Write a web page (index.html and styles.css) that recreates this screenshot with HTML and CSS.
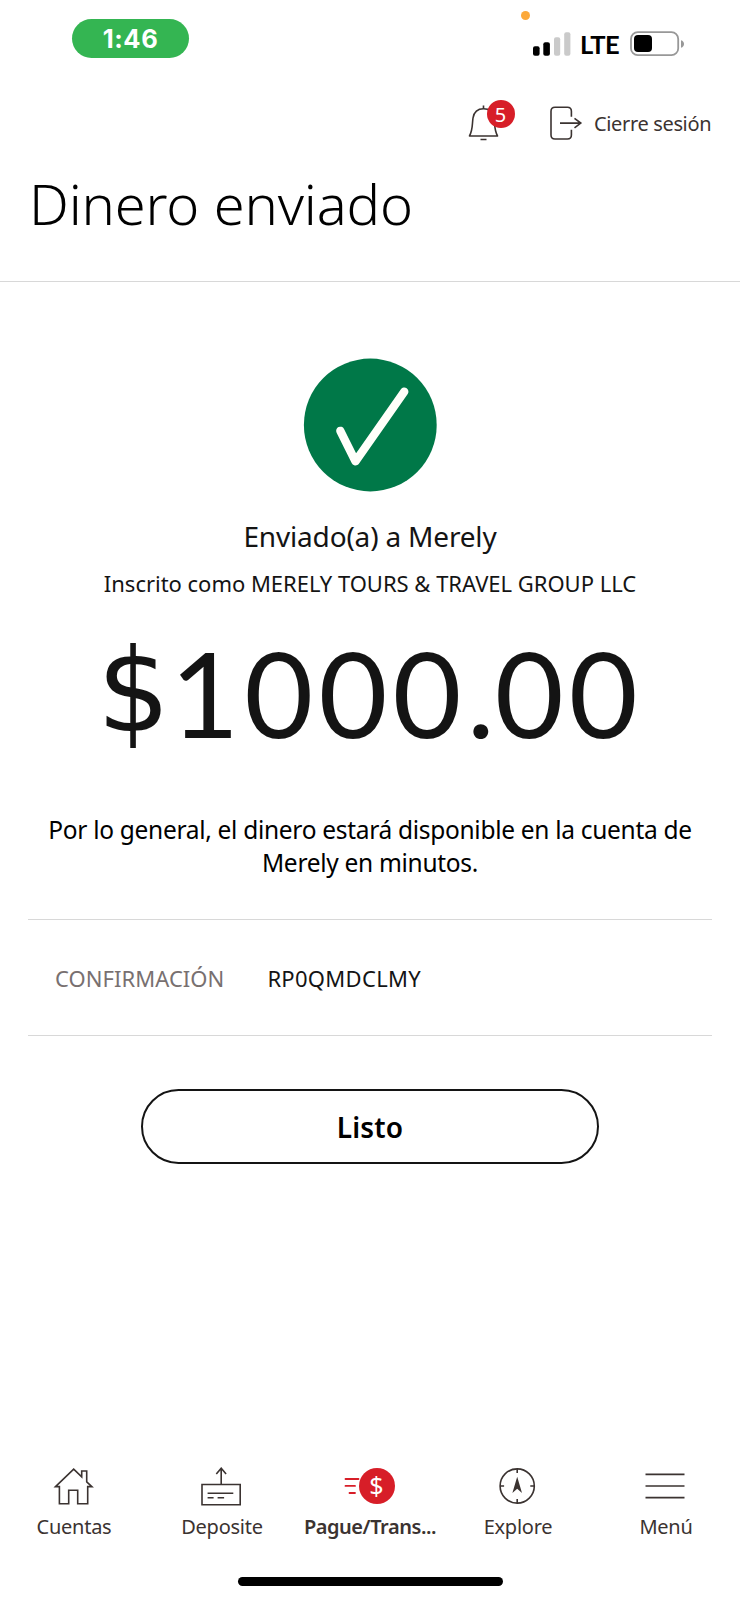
FILE: index.html
```html
<!DOCTYPE html>
<html lang="es">
<head>
<meta charset="utf-8">
<title>Dinero enviado</title>
<link rel="stylesheet" href="styles.css">
</head>
<body>
<div class="screen">
  <div class="status-bar">
    <div class="clock">1:46</div>
    <div class="status-right">
      <span class="mic-dot"></span>
      <svg class="signal" width="38" height="24" viewBox="0 0 38 24">
        <rect x="0" y="14.3" width="6.6" height="9.4" rx="2"/>
        <rect x="10.3" y="10.3" width="6.6" height="13.4" rx="2"/>
        <rect class="off" x="21" y="5.2" width="6.2" height="18.5" rx="2"/>
        <rect class="off" x="31.2" y="0.2" width="6.2" height="23.5" rx="2"/>
      </svg>
      <span class="network">LTE</span>
      <svg class="battery" width="55" height="26" viewBox="0 0 55 26">
        <rect x="1" y="1.2" width="47.2" height="23" rx="6.8" fill="#fff" stroke="#989898" stroke-width="1.8"/>
        <rect x="4" y="4.1" width="18" height="17" rx="4"/>
        <path d="M51 9.2c4 1 4 6.500 0 7.500z" fill="#989898"/>
      </svg>
    </div>
  </div>

  <header class="header">
    <div class="tools">
      <div class="bell">
        <svg width="34" height="38" viewBox="0 0 34 38" fill="none" stroke="#3b3331" stroke-width="1.6" stroke-linejoin="round">
          <path d="M1.500 31C5 24.500 4 19.500 5 13C6 7 10 3.800 15.500 3.800S25 7 26 13C27 19.500 26 24.500 29.500 31Z"/>
          <path d="M15.500 3.800V.5M12.500 34.500h6"/>
        </svg>
        <span class="badge">5</span>
      </div>
      <div class="logout">
        <svg width="34" height="35" viewBox="0 0 34 35" fill="none" stroke="#3b3331" stroke-width="1.6">
          <path d="M21.400 10.800V5.200q0-4-4-4H5q-4 0-4 4V29q0 4 4 4h12.400q4 0 4-4v-5.200M10 17.100h20.500M24.500 12.300l6.300 4.800-6.300 4.800"/>
        </svg>
        <span class="logout-label">Cierre sesión</span>
      </div>
    </div>
    <h1 class="title">Dinero enviado</h1>
  </header>

  <main class="content">
    <svg class="check" width="134" height="134" viewBox="0 0 134 134">
      <circle cx="67.300" cy="67" r="66.400" fill="#007848"/>
      <path d="M37.300 72.800 52.500 103.300 101.300 33.600" fill="none" stroke="#fffffa" stroke-width="8.300" stroke-linecap="round" stroke-linejoin="round"/>
    </svg>
    <p class="recipient">Enviado(a) a Merely</p>
    <p class="registered">Inscrito como MERELY TOURS &amp; TRAVEL GROUP LLC</p>
    <p class="amount"><span class="currency">$</span>1000<span class="point">.</span>00</p>
    <p class="note">Por lo general, el dinero estará disponible en la cuenta de<br>Merely en minutos.</p>
    <dl class="confirmation">
      <dt>CONFIRMACIÓN</dt>
      <dd>RP0QMDCLMY</dd>
    </dl>
    <button class="done">Listo</button>
  </main>

  <nav class="tabs">
    <a class="tab">
      <svg width="42" height="42" viewBox="0 0 42 42" fill="none" stroke="#3b3331" stroke-width="1.600">
        <path d="M2.500 19.600 20.700 2.200l8 7.600V4h5v10.800l5.200 4.800h-4.200v17.100h-10V23.300h-9v13.400h-9.300V19.600z"/>
      </svg>
      <span>Cuentas</span>
    </a>
    <a class="tab">
      <svg width="42" height="42" viewBox="1 0 42 42" fill="none" stroke="#3b3331" stroke-width="1.600">
        <path d="M2 17.500h38.200v20.300H2zM21.200 17.500V1M16.300 6.900l4.900-5.700 4.900 5.700M7.600 26.300h25.700M7.600 30.700h6M17.600 30.700h6.500"/>
      </svg>
      <span>Deposite</span>
    </a>
    <a class="tab active">
      <div class="send">
        <svg width="16" height="18" viewBox="0 0 16 18" fill="none" stroke="#d71e28" stroke-width="1.800" stroke-linecap="round">
          <path d="M1.500 2h13M1.500 8.900h9.500M5.500 16h5.500"/>
        </svg>
        <span class="coin">$</span>
      </div>
      <span>Pague/Trans...</span>
    </a>
    <a class="tab">
      <svg width="42" height="42" viewBox="1 0 42 42" fill="none" stroke="#3b3331" stroke-width="1.600">
        <circle cx="21.200" cy="19" r="17.100"/>
        <path d="M21.200 2v4M21.200 32v4M4.100 19h4M34.300 19h4"/>
        <path d="M21.200 9.700 26 26.100l-4.800-4.400-4.800 4.400z" fill="#3b3331" stroke="none"/>
      </svg>
      <span>Explore</span>
    </a>
    <a class="tab">
      <svg width="42" height="42" viewBox="1 0 42 42" fill="none" stroke="#3b3331" stroke-width="1.700">
        <path d="M1.500 7.400h39M1.500 19h39M1.500 30.600h39"/>
      </svg>
      <span>Menú</span>
    </a>
  </nav>
  <div class="home-indicator"></div>
</div>
</body>
</html>
```
FILE: styles.css
```css
* { box-sizing: border-box; }

body {
  margin: 0;
  background: #fff;
  color: #141414;
  font-family: "Noto Sans", "Open Sans", sans-serif;
}

h1, p, dl, dd { margin: 0; }

svg { display: block; }

.screen {
  width: 740px;
  height: 1600px;
  display: flex;
  flex-direction: column;
}

/* Status bar */
.status-bar {
  height: 80px;
  display: flex;
  justify-content: space-between;
  align-items: flex-start;
  padding: 19px 55px 0 72px;
}

.clock {
  width: 117px;
  height: 39px;
  border-radius: 20px;
  background: #34b552;
  color: #fff;
  font: 700 25.5px/40px Inter, sans-serif;
  letter-spacing: 0.6px;
  text-align: center;
}

.status-right {
  position: relative;
  display: flex;
  align-items: center;
  padding-top: 12px;
}

.mic-dot {
  position: absolute;
  left: -12px;
  top: -8px;
  width: 9px;
  height: 9px;
  border-radius: 50%;
  background: #fca93a;
}

.signal .off { fill: #cacaca; }

.network {
  width: 59px;
  padding-left: 9px;
  color: #000;
  font: 700 25.5px/26px Lato, sans-serif;
  letter-spacing: -0.6px;
}

/* Header */
.header {
  height: 202px;
  border-bottom: 1px solid #d8d8d8;
}

.tools {
  height: 82px;
  display: flex;
  justify-content: flex-end;
  align-items: flex-start;
  gap: 36px;
  padding: 20px 28px 0 0;
}

.bell {
  position: relative;
  width: 46px;
  padding-top: 5px;
}

.badge {
  position: absolute;
  left: 18.5px;
  top: 0;
  width: 28px;
  height: 28px;
  border-radius: 50%;
  background: #d71e28;
  color: #fff;
  font-size: 20px;
  line-height: 29px;
  text-align: center;
}

.logout {
  display: flex;
  align-items: center;
  gap: 10px;
  padding-top: 6px;
}

.logout-label {
  width: 118px;
  color: #3b3331;
  font-size: 20px;
  line-height: 30px;
  letter-spacing: -0.35px;
  white-space: nowrap;
}

.title {
  padding: 1px 0 0 29px;
  font-size: 56px;
  font-weight: 300;
  line-height: 80px;
  letter-spacing: -0.15px;
  color: #000;
}

/* Confirmation */
.content {
  display: flex;
  flex-direction: column;
  align-items: center;
  padding: 76px 28px 0;
}

.recipient {
  padding-top: 23px;
  font-size: 28px;
  line-height: 42px;
  letter-spacing: -0.18px;
}

.registered {
  margin-top: 10px;
  font-size: 22px;
  line-height: 32px;
  letter-spacing: -0.02px;
}

.amount {
  height: 140px;
  margin-top: 23px;
  font-family: Lato, sans-serif;
  font-size: 119px;
  line-height: 140px;
  letter-spacing: 5.1px;
  font-kerning: none;
  white-space: nowrap;
}

.currency {
  font-family: "DejaVu Sans", sans-serif;
  font-size: 115px;
  line-height: 1;
  letter-spacing: 0;
  vertical-align: 7px;
}

.point { letter-spacing: 0; }

.note {
  margin-top: 51px;
  color: #000;
  font-size: 24.5px;
  line-height: 33px;
  letter-spacing: -0.3px;
  text-align: center;
  white-space: nowrap;
}

.confirmation {
  align-self: stretch;
  height: 117px;
  margin-top: 40px;
  display: flex;
  align-items: center;
  gap: 43px;
  padding-left: 27px;
  border-top: 1px solid #d8d8d8;
  border-bottom: 1px solid #d8d8d8;
  font-size: 22px;
  line-height: 32px;
}

.confirmation dt {
  color: #787070;
  letter-spacing: 0.05px;
}

.confirmation dd { letter-spacing: 0.3px; }

.done {
  width: 458px;
  height: 75px;
  margin-top: 53px;
  padding: 0;
  border: 2px solid #141414;
  border-radius: 38px;
  background: #fff;
  color: #000;
  font: 600 28px/40px "Noto Sans", sans-serif;
  letter-spacing: 0.15px;
}

/* Bottom navigation */
.tabs {
  margin-top: auto;
  display: grid;
  grid-template-columns: repeat(5, 1fr);
}

.tab {
  display: flex;
  flex-direction: column;
  align-items: center;
  gap: 3px;
  color: #3b3331;
  font-size: 20px;
  line-height: 30px;
  letter-spacing: -0.25px;
}

.tab.active {
  font-weight: 600;
  letter-spacing: -0.45px;
}

.send {
  height: 42px;
  display: flex;
  align-items: flex-start;
  padding-right: 5px;
}

.send svg { margin: 10px -1px 0 3px; }

.coin {
  width: 36px;
  height: 36px;
  margin-top: 1px;
  border-radius: 50%;
  background: #d71e28;
  color: #fff;
  font-size: 25px;
  font-weight: 400;
  line-height: 35px;
  letter-spacing: 0;
  text-align: center;
}

.home-indicator {
  width: 265px;
  height: 9px;
  margin: 35px auto 14px;
  border-radius: 5px;
  background: #000;
}
```
